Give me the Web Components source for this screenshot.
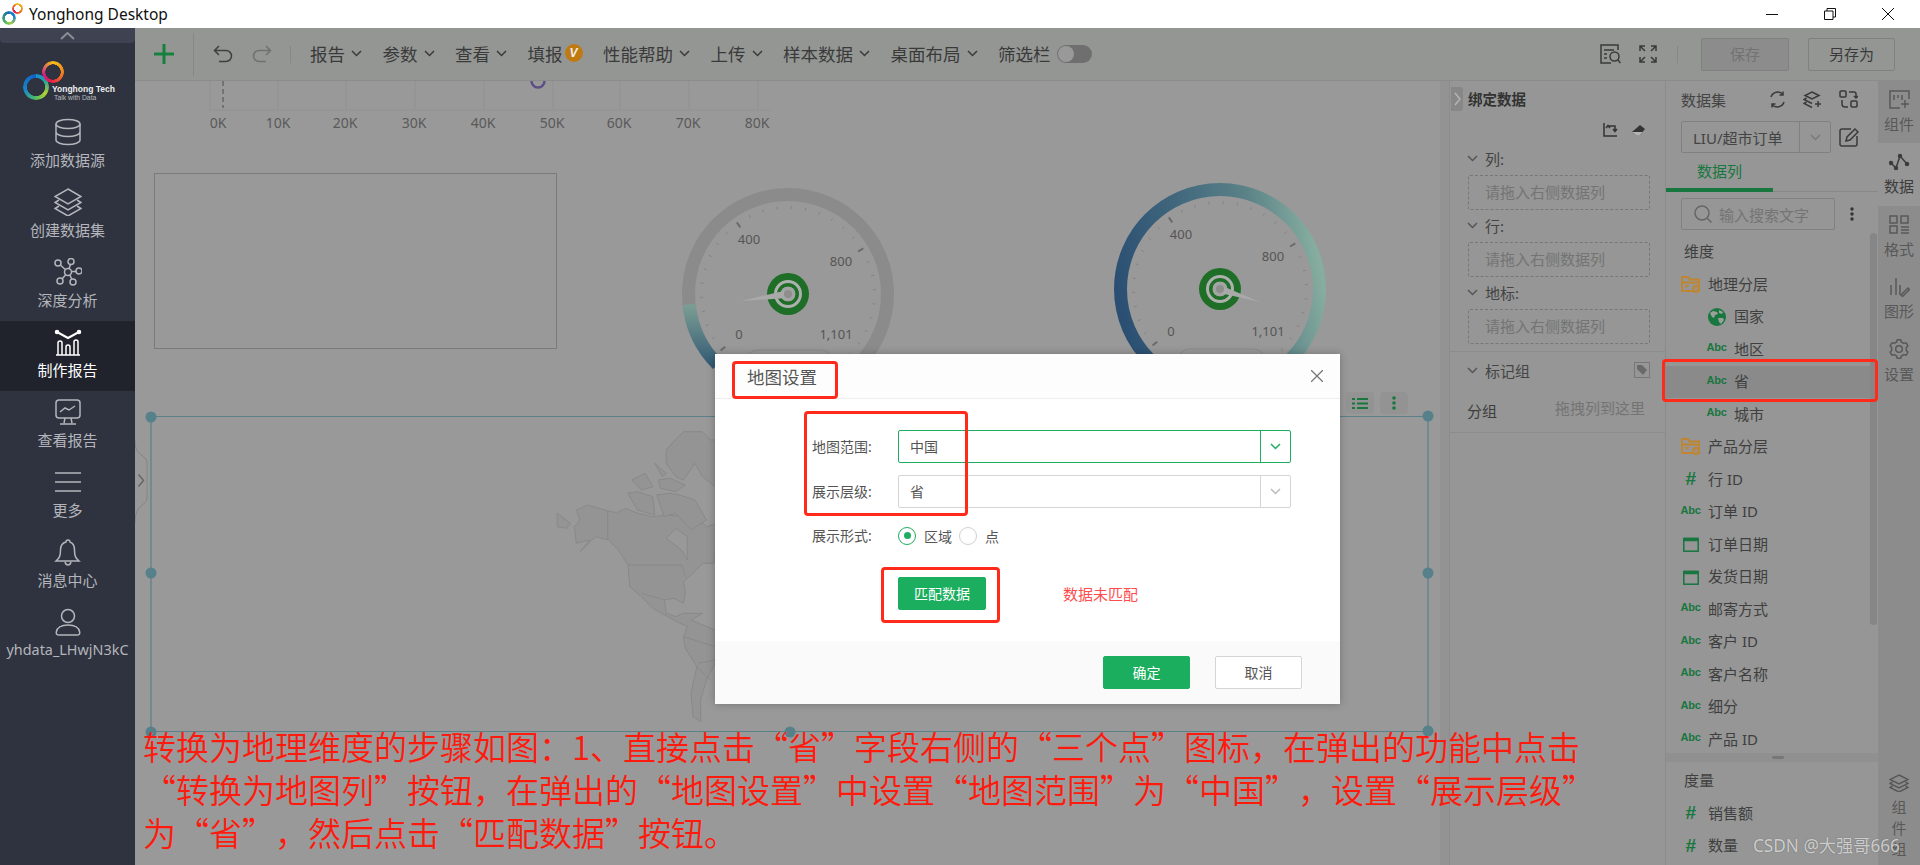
<!DOCTYPE html>
<html lang="zh-CN">
<head>
<meta charset="utf-8">
<title>Yonghong Desktop</title>
<style>
html, body {
	margin: 0;
	height: 865px;
	overflow: hidden;
	background: #999;
	font-family: "Noto Sans", "Noto Sans CJK SC", sans-serif;
	color: #3d3d3d;
}
</style>
</head>
<body>
<yh-titlebar>Yonghong Desktop</yh-titlebar>
<yh-workbench>
	<yh-sidenav slot="nav"></yh-sidenav>
	<yh-toolbar slot="top"></yh-toolbar>
	<yh-canvas></yh-canvas>
	<yh-bind-panel></yh-bind-panel>
	<yh-data-panel></yh-data-panel>
	<yh-rail></yh-rail>
	<yh-map-dialog slot="modal"></yh-map-dialog>
</yh-workbench>
<yh-callout x="732" y="361" w="106" h="38"></yh-callout>
<yh-callout x="804" y="411" w="164" h="105"></yh-callout>
<yh-callout x="881" y="567" w="119" h="56"></yh-callout>
<yh-callout x="1662" y="359" w="216" h="43"></yh-callout>
<yh-note>转换为地理维度的步骤如图：1、直接点击“省”字段右侧的“三个点”图标，在弹出的功能中点击<br>“转换为地图列”按钮，在弹出的“地图设置”中设置“地图范围”为“中国”，设置“展示层级”<br>为“省”，然后点击“匹配数据”按钮。</yh-note>
<yh-watermark>CSDN @大强哥666</yh-watermark>

<script>
(() => {

const GREEN = '#18763f';

const svg = (w, h, body, extra = '') =>
	`<svg width="${w}" height="${h}" viewBox="0 0 ${w} ${h}" fill="none" stroke="currentColor" stroke-width="1.5" ${extra}>${body}</svg>`;

const chevron = (w = 11, color = 'currentColor') =>
	`<svg width="${w}" height="7" viewBox="0 0 11 7" fill="none" stroke="${color}" stroke-width="1.5"><path d="M1 1l4.5 4.5L10 1"/></svg>`;

// six lobes, the same outline the settings tab uses
function gear_path() {
	const pts = [];
	for (let i = 0; i < 6; i++) {
		const mid = i * 60;
		for (const [off, r] of [[-19, 7.4], [-11, 9.4], [11, 9.4], [19, 7.4]]) {
			const a = (mid + off) * Math.PI / 180;
			pts.push(`${(10 + r * Math.sin(a)).toFixed(1)} ${(10 - r * Math.cos(a)).toFixed(1)}`);
		}
	}
	return `M${pts.join('L')}Z`;
}

const ICONS = {
	db: svg(28, 28, '<ellipse cx="14" cy="6" rx="12" ry="4.500"/><path d="M2 6v16c0 2.500 5.400 4.500 12 4.500s12-2 12-4.500V6M2 14c0 2.500 5.400 4.500 12 4.500s12-2 12-4.500"/>', 'stroke-width="2"'),
	layers: svg(28, 28, '<path d="M14 1L27 8.500 14 16 1 8.500z"/><path d="M5 12L1 14.500 14 22l13-7.500-4-2.500"/><path d="M5 18l-4 2.500L14 28l13-7.500-4-2.500"/>'),
	nodes: svg(28, 28, '<circle cx="14" cy="14" r="3.500"/><circle cx="4" cy="5" r="3"/><circle cx="17" cy="3.500" r="3"/><circle cx="25" cy="13" r="3"/><circle cx="19" cy="24" r="3"/><circle cx="6" cy="23" r="3"/><path d="M6.300 7l5 4.500M16.500 6.500l-1.500 4M22 13.500h-4.500M17.800 21l-2-3.800M8 21l3.500-4"/>'),
	chart: svg(28, 28, '<path d="M3 4l11 6 11-6" stroke-width="2"/><circle cx="3" cy="4" r="1.500" fill="currentColor"/><circle cx="25" cy="4" r="1.500" fill="currentColor"/><path d="M2 27h24M4 27V15a2 2 0 014 0v12M12 27v-8a2 2 0 014 0v8M20 27V14a2 2 0 014 0v13"/>'),
	monitor: svg(28, 28, '<rect x="2" y="2" width="24" height="18" rx="3"/><path d="M6 14l5-4 4 2 6-4M11 20l-1 5M17 20l1 5M6 26h16"/>'),
	more: svg(28, 28, '<path d="M1 5h26M1 14h26M1 23h26"/>', 'stroke-width="2"'),
	bell: svg(28, 28, '<path d="M14 2c-1 0-2 .8-2 2C8 5 6.500 8.500 6.500 12c0 6-1 8-4.500 11h23c-3.500-3-4.500-5-4.500-11 0-3.500-1.500-7-4.500-8 0-1.200-1-2-2-2zM11 24c.5 2 1.500 3 3 3s2.500-1 3-3"/>'),
	user: svg(28, 28, '<circle cx="14" cy="8" r="6.500"/><path d="M5 27h18c2 0 3-1 2.700-3-1-5-6-7-11.700-7S3.300 19 2.300 24C2 26 3 27 5 27z"/>'),
	plus: `<svg width="20" height="20" viewBox="0 0 20 20"><path d="M10 0v20M0 10h20" stroke="#18803f" stroke-width="3"/></svg>`,
	undo: svg(20, 18, '<path d="M6 1L1.500 5.500 6 10M1.500 5.500H13a5.500 5.500 0 010 11H6"/>'),
	redo: svg(20, 18, '<path d="M14 1l4.500 4.500L14 10M18.500 5.500H7a5.500 5.500 0 000 11h7"/>'),
	report_search: svg(21, 20, '<path d="M18 6V1H1v18h10M4 6h10M4 10h3M4 14h3"/><circle cx="14.500" cy="12.500" r="4.500"/><path d="M18 16l2.500 3"/>'),
	fullscreen: svg(18, 18, '<path d="M1 6V1h5M1 1l5 5M12 1h5v5M17 1l-5 5M1 12v5h5M1 17l5-5M17 12v5h-5M17 17l-5-5"/>'),
	swap: svg(16, 16, '<path d="M2 1v13h13M6 4h7v5M4 6l2-2.500L8 6M11 7l2 2.500L15 7"/>'),
	eraser: `<svg width="15" height="13" viewBox="0 0 15 13"><path d="M9 1l5 4-5 6H5L1 8z" fill="#333"/><path d="M1 8l4 3h4l2.500-3z" fill="#b4b4b4"/></svg>`,
	tag: `<svg width="16" height="16" viewBox="0 0 16 16"><rect x=".5" y=".5" width="15" height="15" fill="none" stroke="#777"/><path d="M3 3h5l5 5-4 5-6-6z" fill="#6a6a6a"/></svg>`,
	refresh: svg(17, 17, '<path d="M2 6a7 7 0 0112-2.500M15 11a7 7 0 01-12 2.500M14 .5v3.500h-3.500M3 16.500V13h3.500"/>'),
	layers_plus: svg(19, 17, '<path d="M9 1l7 3.500-7 3.500-7-3.500zM3.500 7L1 8.500 9 12.500M3.500 11L1 12.500 9 16.500M15 10v6M12 13h6"/>'),
	col_swap: svg(19, 18, '<rect x="1" y="1" width="6" height="6" rx="1"/><rect x="12" y="11" width="6" height="6" rx="1"/><path d="M10 2h5a2 2 0 012 2v3M3 10v4a3 3 0 003 3h3M15 6l2 2 2-2"/>'),
	edit: svg(20, 20, '<path d="M12 2H3a2 2 0 00-2 2v13a2 2 0 002 2h13a2 2 0 002-2V9"/><path d="M7 14l1-4 8-8 3 3-8 8z"/>'),
	search: svg(18, 18, '<circle cx="8" cy="8" r="7"/><path d="M13 13l4.500 4.500"/>'),
	dots: `<svg width="4" height="14" viewBox="0 0 4 14" fill="#333"><circle cx="2" cy="2" r="1.700"/><circle cx="2" cy="7" r="1.700"/><circle cx="2" cy="12" r="1.700"/></svg>`,
	folder: `<svg width="19" height="17" viewBox="0 0 19 17" fill="none" stroke="#c08530" stroke-width="1.800"><path d="M1 15V1h6l1.500 2.500H18V15H1zM1 6.500h17"/><path d="M4 9.500l3 1-3 1M8 9.500H4" stroke-width="1"/><circle cx="15" cy="13" r="3" fill="#959695"/><path d="M13.500 11.500l3 3" stroke-width="1"/></svg>`,
	globe: `<svg width="18" height="18" viewBox="0 0 18 18"><circle cx="9" cy="9" r="9" fill="#18763f"/><path d="M2 5l3-2 4 1 1 2-3 1-1 3-2-1zM11 2l4 2-1 2-3-1zM10 10l5 0 1 2-3 4-2-2z" fill="#9aa09a"/></svg>`,
	calendar: `<svg width="16" height="16" viewBox="0 0 16 16" fill="none" stroke="#18763f" stroke-width="1.500"><rect x=".8" y="2.500" width="14.400" height="12.700"/><path d="M.8 3.500h14.400" stroke-width="3.500"/></svg>`,
	rail_comp: svg(21, 19, '<path d="M20 9V1H1v17h10"/><path d="M5 5v5M9 5v3M13 5v5M16 10v8M12 14h8"/>', 'stroke-width="1.700"'),
	rail_data: svg(21, 18, '<path d="M2 10l5 5 4-12 7 8"/><circle cx="2" cy="10" r="1.500" fill="currentColor"/><circle cx="7" cy="15" r="1.500" fill="currentColor"/><circle cx="11" cy="3" r="1.500" fill="currentColor"/><circle cx="18" cy="11" r="1.500" fill="currentColor"/>', 'stroke-width="2"'),
	rail_format: svg(21, 19, '<rect x="1" y="1" width="7" height="7"/><rect x="12" y="1" width="7" height="7"/><rect x="1" y="11" width="7" height="7"/><path d="M12 12h8M12 15h8M12 18h8"/>', 'stroke-width="1.700"'),
	rail_shape: svg(21, 20, '<path d="M2 8v10M7 1v17M11 18V8M12 18l7-7 1.500 1.500-7 7z"/>', 'stroke-width="1.700"'),
	rail_gear: svg(20, 20, `<path d="${gear_path()}" stroke-linejoin="round"/><circle cx="10" cy="10" r="3.300"/>`),
	rail_layers: svg(20, 18, '<path d="M10 1l9 4.500-9 4.500L1 5.500zM3.500 8L1 9.500 10 14l9-4.500L16.500 8M3.500 12L1 13.500 10 18l9-4.500L16.500 12"/>')
};

class ShadowEl extends HTMLElement {
	connectedCallback() {
		if (this.shadowRoot) {
			return;
		}

		this.attachShadow({ mode: 'open' });
		this.shadowRoot.innerHTML = this.render();
	}

	attr(name, fallback = '') {
		return this.getAttribute(name) ?? fallback;
	}
}

customElements.define('yh-titlebar', class extends ShadowEl {
	render() {
		return `<style>
			:host { display: flex; align-items: center; height: 28px; background: #fff; color: #111; font-size: 15.500px; position: relative; }
			.logo { width: 22px; height: 22px; margin: 0 5px 0 2px; position: relative; }
			.ring { position: absolute; border-radius: 50%; -webkit-mask: radial-gradient(closest-side, transparent 58%, #000 62%); mask: radial-gradient(closest-side, transparent 58%, #000 62%); }
			.a { left: 0; top: 8px; width: 14px; height: 14px; background: conic-gradient(#1a7fd0, #1a7fd0 20%, #a5d040 45%, #3fb56a 65%, #1a5fb0); }
			.b { left: 10px; top: 0; width: 11px; height: 11px; background: conic-gradient(#f5b81c, #f08020 35%, #e01c50 65%, #f5b81c); }
			.label { flex: 1; }
			.controls { display: flex; margin-right: 26px; gap: 46px; align-items: center; }
		</style>
		<div class="logo"><div class="ring a"></div><div class="ring b"></div></div>
		<div class="label"><slot></slot></div>
		<div class="controls">
			<svg width="12" height="12" viewBox="0 0 12 12" stroke="#111" fill="none"><path d="M0 6.500h12"/></svg>
			<svg width="12" height="12" viewBox="0 0 12 12" stroke="#111" fill="none"><path d="M.5 3h8.500v8.500H.5zM3 3V.5h8.500V9H9"/></svg>
			<svg width="12" height="12" viewBox="0 0 12 12" stroke="#111" fill="none"><path d="M0 0l12 12M12 0L0 12"/></svg>
		</div>`;
	}
});

customElements.define('yh-workbench', class extends ShadowEl {
	render() {
		return `<style>
			:host { display: grid; grid-template-columns: 135px 1fr; height: 837px; position: relative; overflow: hidden; }
			.main { display: flex; flex-direction: column; min-width: 0; height: 837px; }
			.row { flex: 1; display: flex; min-height: 0; }
			.overlay { position: absolute; left: 135px; right: 0; top: 0; bottom: 0; display: flex; justify-content: center; align-items: flex-start; padding-top: 326px; box-sizing: border-box; pointer-events: none; }
		</style>
		<slot name="nav"></slot>
		<div class="main">
			<slot name="top"></slot>
			<div class="row"><slot></slot></div>
		</div>
		<div class="overlay"><slot name="modal"></slot></div>`;
	}
});

customElements.define('yh-sidenav', class extends ShadowEl {
	render() {
		return `<style>
			:host { display: flex; flex-direction: column; background: #2f3340; height: 837px; }
			.up { height: 15px; background: #3f4250; border-radius: 0 0 4px 4px; display: flex; justify-content: center; align-items: center; color: #8b8d96; }
			.logo { height: 68px; position: relative; }
			.ring { position: absolute; border-radius: 50%; -webkit-mask: radial-gradient(closest-side, transparent 68%, #000 72%); mask: radial-gradient(closest-side, transparent 68%, #000 72%); }
			.a { left: 23px; top: 31px; width: 26px; height: 26px; background: conic-gradient(#1890d0 0%, #22a0a0 15%, #b4d030 35%, #50c060 50%, #1888c8 70%, #1060c0 100%); }
			.b { left: 42px; top: 18px; width: 22px; height: 22px; background: conic-gradient(#f8c018, #f07820 30%, #e8184c 55%, #c8208c 70%, #f8c018); }
			.name { position: absolute; left: 52px; top: 40px; color: #eee; font: bold 8.500px/12px "Liberation Sans", sans-serif; white-space: nowrap; }
			.tag { position: absolute; left: 54px; top: 50px; color: #bbb; font: 6.800px/10px "Liberation Sans", sans-serif; white-space: nowrap; }
		</style>
		<div class="up"><svg width="15" height="8" viewBox="0 0 15 8" fill="none" stroke="currentColor" stroke-width="2"><path d="M1 7l6.500-6L14 7"/></svg></div>
		<div class="logo">
			<div class="ring a"></div><div class="ring b"></div>
			<div class="name">Yonghong Tech</div>
			<div class="tag">Talk with Data</div>
		</div>
		<yh-nav-item icon="db">添加数据源</yh-nav-item>
		<yh-nav-item icon="layers">创建数据集</yh-nav-item>
		<yh-nav-item icon="nodes">深度分析</yh-nav-item>
		<yh-nav-item icon="chart" active>制作报告</yh-nav-item>
		<yh-nav-item icon="monitor">查看报告</yh-nav-item>
		<yh-nav-item icon="more">更多</yh-nav-item>
		<yh-nav-item icon="bell">消息中心</yh-nav-item>
		<yh-nav-item icon="user" small>yhdata_LHwjN3kC</yh-nav-item>`;
	}
});

customElements.define('yh-nav-item', class extends ShadowEl {
	render() {
		return `<style>
			:host { display: flex; flex-direction: column; align-items: center; height: 70px; padding-top: 7px; box-sizing: border-box; color: #b4b6bb; font-size: 15px; white-space: nowrap; }
			:host([active]) { background: #21232c; color: #fff; }
			:host([small]) { font-size: 14.400px; }
			.icon { height: 28px; display: block; }
			.text { line-height: 28px; }
		</style>
		<div class="icon">${ICONS[this.attr('icon')]}</div>
		<div class="text"><slot></slot></div>`;
	}
});

customElements.define('yh-toolbar', class extends ShadowEl {
	render() {
		return `<style>
			:host { display: flex; align-items: center; height: 53px; padding-left: 19px; box-sizing: border-box; background: #949694; border-bottom: 1px solid #8a8c8c; font-size: 17.500px; color: #3a3a3a; white-space: nowrap; }
			.sep { width: 1px; background: #868886; }
			.tall { height: 43px; margin: 0 19px; }
			.short { height: 17px; margin: 0 19px 0 18px; }
			.undo { margin-right: 19px; color: #3f3f3f; display: flex; }
			.redo { color: #6f706f; display: flex; }
			.menus { display: flex; align-items: center; gap: 20.500px; margin-bottom: 2px; }
			.plus { display: flex; }
			.badge { display: inline-flex; width: 18px; height: 18px; border-radius: 50%; background: #c07a12; color: #eee; font: italic bold 12px/18px "Liberation Sans", sans-serif; justify-content: center; margin-left: 2px; }
			.fill { display: flex; align-items: center; }
			.switch { display: flex; align-items: center; }
			.toggle { width: 35px; height: 18px; border-radius: 9px; background: #6f6f6f; margin-left: 6px; position: relative; top: 1px; }
			.toggle::before { content: ""; position: absolute; left: 1px; top: 1px; width: 16px; height: 16px; border-radius: 50%; background: #999; }
			.right { margin-left: auto; display: flex; align-items: center; margin-right: 25px; }
			.right .sep { height: 17px; margin: 0 23px 0 20px; }
			.tool { display: flex; margin-right: 18px; }
			.tool:nth-child(2) { margin-right: 0; }
			.btn { width: 88px; height: 33px; line-height: 31px; box-sizing: border-box; border: 1px solid #7f807f; border-radius: 2px; text-align: center; font-size: 15px; }
			.btn.last { width: 87px; }
			.save { background: #8c8c8c; color: #737373; margin-right: 19px; }
		</style>
		<div class="plus">${ICONS.plus}</div>
		<div class="sep tall"></div>
		<div class="undo">${ICONS.undo}</div>
		<div class="redo">${ICONS.redo}</div>
		<div class="sep short"></div>
		<div class="menus">
			<yh-menu>报告</yh-menu>
			<yh-menu>参数</yh-menu>
			<yh-menu>查看</yh-menu>
			<div class="fill">填报<span class="badge">V</span></div>
			<yh-menu>性能帮助</yh-menu>
			<yh-menu>上传</yh-menu>
			<yh-menu>样本数据</yh-menu>
			<yh-menu>桌面布局</yh-menu>
			<div class="switch">筛选栏<div class="toggle"></div></div>
		</div>
		<div class="right">
			<div class="tool">${ICONS.report_search}</div>
			<div class="tool">${ICONS.fullscreen}</div>
			<div class="sep"></div>
			<div class="btn save">保存</div>
			<div class="btn last">另存为</div>
		</div>`;
	}
});

customElements.define('yh-menu', class extends ShadowEl {
	render() {
		return `<style>
			:host { display: flex; align-items: center; gap: 6px; }
		</style>
		<slot></slot>${chevron()}`;
	}
});

customElements.define('yh-gauge', class extends ShadowEl {
	render() {
		const cx = +this.attr('cx');
		const cy = +this.attr('cy');
		const [nx, ny] = this.attr('needle').split(',').map(Number);
		const mode = this.attr('mode');
		const full = mode === 'full';
		const pt = (r, deg) => {
			const a = deg * Math.PI / 180;
			return `${(r * Math.sin(a)).toFixed(1)} ${(-r * Math.cos(a)).toFixed(1)}`;
		};
		const arc = (from, to, r = 99.5) => `M${pt(r, from)}A${r} ${r} 0 ${to - from > 180 ? 1 : 0} 1 ${pt(r, to)}`;

		let ticks = '';
		for (let i = 0; i <= 28; i++) {
			const deg = -130 + i * 9.44;
			const major = i % 10 === 0;
			ticks += `<path d="M${pt(major ? 82 : 85, deg)}L${pt(88, deg)}" stroke="${major ? '#6a6a6a' : '#848484'}" stroke-width="${major ? 2 : 1}"/>`;
		}

		const ring = full
			? `<path d="${arc(-135, 135)}" stroke="url(#full)" stroke-width="13" fill="none"/>`
			: `<path d="${arc(-135, 135)}" stroke="#8a8b8a" stroke-width="13" fill="none"/>
				<path d="${arc(-135, -96)}" stroke="url(#part)" stroke-width="13" fill="none"/>`;

		return `<style>
			:host { position: absolute; left: ${cx - 120}px; top: ${cy - 120}px; width: 240px; height: 240px; }
			text { font: 13px "Noto Sans", sans-serif; fill: #555; text-anchor: middle; dominant-baseline: middle; }
		</style>
		<svg width="240" height="240" viewBox="-120 -120 240 240">
			<defs>
				<linearGradient id="part" gradientUnits="userSpaceOnUse" x1="0" y1="10" x2="0" y2="75">
					<stop offset="0" stop-color="#7d9f95"/><stop offset="1" stop-color="#2f5672"/>
				</linearGradient>
				<linearGradient id="full" gradientUnits="userSpaceOnUse" x1="-90" y1="70" x2="110" y2="30">
					<stop offset="0" stop-color="#2b4f72"/><stop offset=".4" stop-color="#42697e"/><stop offset=".72" stop-color="#5b8287"/><stop offset="1" stop-color="#86ad9f"/>
				</linearGradient>
			</defs>
			${ring}
			${ticks}
			<rect x="-42" y="${full ? 60 : 56}" width="87" height="30" rx="12" fill="none" stroke="#8b8b8b"/>
			<text x="-39" y="-53">400</text>
			<text x="53" y="-31">800</text>
			<text x="-49" y="${full ? 44 : 42}">0</text>
			<text x="48" y="${full ? 44 : 42}">1,101</text>
			<circle r="21" fill="#1e6e27"/>
			<circle r="12.500" fill="#1e6e27" stroke="#adb0ad" stroke-width="3"/>
			<circle r="8" fill="#a2a5a2" stroke="#1e6e27" stroke-width="1"/>
			<path d="M0 -4L${nx} ${ny}L0 4z" fill="#a9a9a9"/>
			<circle r="4" fill="#8e8e8e"/>
		</svg>`;
	}
});

customElements.define('yh-canvas', class extends ShadowEl {
	render() {
		const labels = [218, 278, 345, 414, 483, 552, 619, 688, 757];
		const grid = [210, 278, 346, 415, 484, 553, 620, 689, 758];
		const x_axis = labels.map((x, i) => `<text x="${x}" y="124">${i * 10 ? i * 10 + 'K' : '0K'}</text>`).join('');
		const x_grid = grid.map(x => `<path d="M${x} 81V110"/>`).join('');
		const handles = [[151, 417], [151, 573], [151, 732], [790, 732], [1428, 416], [1428, 573], [1428, 731]]
			.map(([x, y]) => `<circle cx="${x}" cy="${y}" r="5.500"/>`).join('');

		return `<style>
			:host { display: block; flex: 0 0 1305px; height: 784px; position: relative; background: #999; overflow: hidden; }
			svg.board { position: absolute; left: 0; top: 0; }
			svg.board text { font: 14px "Noto Sans", sans-serif; fill: #5a5a5a; text-anchor: middle; dominant-baseline: middle; }
			.sticky { position: absolute; left: 19px; top: 92px; width: 403px; height: 176px; border: 1px solid #7b7b7b; box-sizing: border-box; }
			.frame-tools { position: absolute; left: 1211px; top: 311px; display: flex; gap: 6px; }
			.frame-tools div { width: 28px; height: 22px; background: #939393; border-radius: 4px; display: flex; align-items: center; justify-content: center; }
		</style>
		<svg class="board" width="1305" height="784" viewBox="135 81 1305 784">
			<g stroke="#919191" fill="none">${x_grid}<path d="M210 110H770"/></g>
			<path d="M223 81V108" stroke="#4e4e4e" stroke-dasharray="5 3"/>
			<circle cx="538" cy="81" r="6.500" fill="none" stroke="#5c4f87" stroke-width="2.500"/>
			${x_axis}
			<g transform="translate(140 400) scale(.3827 .3333)" fill="#949494" stroke="#898989">
				<path vector-effect="non-scaling-stroke" d="M1140 330L1170 315 1220 332 1245 338 1270 325 1300 340 1340 350 1380 345 1420 350 1450 345 1480 380 1503 372V440L1500 490 1470 490 1440 525 1420 545 1425 580 1420 610 1395 595 1370 600 1375 640 1400 650 1420 640 1470 640 1440 660 1460 670 1503 690V790L1480 840 1465 900 1465 965 1445 950 1440 880 1455 800 1425 745 1420 710 1430 680 1395 660 1340 625 1310 590 1280 560 1275 495 1250 450 1225 420 1190 410 1150 455 1175 420 1140 430 1135 380 1150 360Z"/>
				<path vector-effect="non-scaling-stroke" d="M1390 130L1420 95 1470 95 1490 120 1503 120V260L1470 230 1450 190 1420 240 1400 230 1375 190 1375 150Z"/>
				<path vector-effect="non-scaling-stroke" d="M1375 415L1400 385 1430 410 1430 480 1415 450Z" fill="#999"/>
				<path vector-effect="non-scaling-stroke" d="M1285 240L1320 220 1340 260 1310 270ZM1355 240L1385 235 1425 255 1400 275 1360 265ZM1275 280L1300 275 1340 290 1345 345 1300 330ZM1350 285L1385 280 1410 285 1450 300 1480 360 1440 390 1400 340 1370 350ZM1345 190L1375 220 1365 230ZM1090 340L1125 370 1115 385 1090 380Z"/>
				<path vector-effect="non-scaling-stroke" d="M1222 332V420M1275 495H1415L1425 530M1310 580L1370 600M1420 710L1503 740M1460 790L1503 780M1455 800L1490 840" fill="none"/>
			</g>
			<g fill="none" stroke="#5b8088" stroke-width="1.200"><path d="M151 416.500H1428V731.500H151Z"/></g>
			<g fill="#56808a">${handles}</g>
			<path d="M135 440c0 12 4 13 9 17 3 3 3 3 3 8v30c0 6 0 6-5 10-5 5-7 8-7 18" fill="none" stroke="#858585"/>
			<path d="M138.500 474.500l5 6-5 6" fill="none" stroke="#666" stroke-width="1.500"/>
		</svg>
		<div class="sticky"></div>
		<div class="frame-tools">
			<div><svg width="16" height="13" viewBox="0 0 16 13" stroke="${GREEN}" stroke-width="2"><path d="M0 2h3M5 2h11M0 6.500h3M5 6.500h11M0 11h3M5 11h11"/></svg></div>
			<div><svg width="4" height="14" viewBox="0 0 4 14" fill="${GREEN}"><circle cx="2" cy="2" r="1.800"/><circle cx="2" cy="7" r="1.800"/><circle cx="2" cy="12" r="1.800"/></svg></div>
		</div>
		<yh-gauge cx="653" cy="213" needle="-47,7" mode="part"></yh-gauge>
		<yh-gauge cx="1085" cy="208" needle="40,13" mode="full"></yh-gauge>`;
	}
});

customElements.define('yh-drop-row', class extends ShadowEl {
	render() {
		return `<style>
			:host { display: block; }
			.head { display: flex; align-items: center; height: 20px; margin: -1px 0 1px -1px; gap: 7px; color: #444; }
			.box { margin-top: 7px; height: 35px; line-height: 33px; box-sizing: border-box; border: 1px dashed #777; border-radius: 2px; padding-left: 16px; color: #747474; }
		</style>
		<div class="head">${chevron(11, '#555')}<slot></slot></div>
		<div class="box">请拖入右侧数据列</div>`;
	}
});

customElements.define('yh-bind-panel', class extends ShadowEl {
	render() {
		return `<style>
			:host { display: flex; flex: 0 0 226px; height: 784px; background: #959695; font-size: 15px; box-sizing: border-box; border-right: 1px solid #8a8c8a; position: relative; }
			.strip { flex: 0 0 10px; background: #929392; border-right: 1px solid #8b8c8b; box-sizing: border-box; }
			.tab { position: absolute; left: 11px; top: 6px; width: 12px; height: 24px; background: #878787; border-radius: 0 3px 3px 0; display: flex; align-items: center; justify-content: center; }
			.body { flex: 1; min-width: 0; }
			.title { height: 36px; line-height: 36px; padding-left: 18px; font-weight: bold; font-size: 14.500px; color: #333; }
			.tools { height: 26px; display: flex; justify-content: flex-end; align-items: center; gap: 13px; padding-right: 19px; color: #333; }
			.rows { padding: 6px 15px 0 18px; display: flex; flex-direction: column; gap: 6px; }
			.line { border-top: 1px solid #8b8c8b; margin-top: 7px; }
			.mark { display: flex; align-items: center; height: 36px; padding: 0 15px 0 17px; gap: 7px; color: #444; }
			.mark .name { flex: 1; }
			.group { display: flex; justify-content: space-between; height: 45px; align-items: center; padding: 0 20px 0 17px; border-bottom: 1px solid #8b8c8b; box-sizing: border-box; }
			.group span:last-child { color: #747474; position: relative; top: -3px; }
		</style>
		<div class="strip"></div>
		<div class="tab"><svg width="7" height="14" viewBox="0 0 7 14" fill="none" stroke="#b4b4b4" stroke-width="1.500"><path d="M1 1l5 6-5 6"/></svg></div>
		<div class="body">
			<div class="title">绑定数据</div>
			<div class="tools">${ICONS.swap}${ICONS.eraser}</div>
			<div class="rows">
				<yh-drop-row>列:</yh-drop-row>
				<yh-drop-row>行:</yh-drop-row>
				<yh-drop-row>地标:</yh-drop-row>
			</div>
			<div class="line"></div>
			<div class="mark">${chevron(11, '#555')}<span class="name">标记组</span>${ICONS.tag}</div>
			<div class="group"><span>分组</span><span>拖拽列到这里</span></div>
		</div>`;
	}
});

customElements.define('yh-field', class extends ShadowEl {
	render() {
		const kind = this.attr('kind');
		const glyphs = {
			abc: '<span class="abc">Abc</span>',
			num: '<span class="num">#</span>',
			date: ICONS.calendar,
			folder: ICONS.folder,
			globe: ICONS.globe
		};

		return `<style>
			:host { display: flex; align-items: center; height: 32.500px; padding-left: 15px; font-size: 15px; color: #3f3f3f; white-space: nowrap; }
			:host([child]) { padding-left: 41px; }
			:host([selected]) { background: #8a8a8a; }
			:host([plain]) .glyph { display: none; }
			:host([plain]) { padding-left: 18px; }
			.glyph { width: 19px; margin-right: 8px; display: flex; justify-content: center; align-items: center; }
			.label { position: relative; top: -1px; }
			.abc { color: ${GREEN}; font: bold 11px "Liberation Sans", sans-serif; letter-spacing: -.3px; position: relative; top: -2px; }
			.num { color: ${GREEN}; font: italic bold 19px "Liberation Sans", sans-serif; }
		</style>
		<div class="glyph">${glyphs[kind] || ''}</div><span class="label"><slot></slot></span>`;
	}
});

customElements.define('yh-data-panel', class extends ShadowEl {
	render() {
		return `<style>
			:host { display: flex; flex-direction: column; flex: 0 0 212px; height: 784px; background: #959695; font-size: 15px; position: relative; overflow: hidden; }
			.head { height: 36px; display: flex; align-items: center; padding: 0 20px 0 15px; color: #444; }
			.head .name { flex: 1; }
			.head .icons { display: flex; gap: 17px; color: #3a3a3a; align-items: center; }
			.select-row { display: flex; align-items: center; margin: 4px 0 0 15px; }
			.select { width: 150px; height: 32px; box-sizing: border-box; border: 1px solid #7f807f; border-radius: 2px; display: flex; align-items: center; color: #444; white-space: nowrap; }
			.select .value { flex: 1; padding-left: 11px; }
			.select .drop { width: 30px; height: 100%; border-left: 1px solid #7f807f; display: flex; align-items: center; justify-content: center; }
			.edit { margin-left: 8px; color: #3a3a3a; display: flex; }
			.tabs { height: 39px; border-bottom: 1px solid #878887; box-sizing: border-box; position: relative; }
			.tab { width: 107px; height: 39px; box-sizing: border-box; border-bottom: 4px solid ${GREEN}; color: ${GREEN}; text-align: center; line-height: 37px; }
			.search-row { display: flex; align-items: center; margin: 6px 0 0 15px; }
			.search { width: 154px; height: 32px; box-sizing: border-box; border: 1px solid #7f807f; border-radius: 2px; display: flex; align-items: center; padding-left: 12px; gap: 7px; color: #747474; white-space: nowrap; }
			.search svg { color: #666; }
			.more { margin-left: 15px; display: flex; }
			.tree { margin-top: 5.700px; height: 517.300px; overflow: hidden; }
			.band { height: 9px; background: #8f908f; display: flex; justify-content: center; align-items: center; padding-left: 12px; box-sizing: border-box; margin-bottom: 2.700px; }
			.band div { width: 12px; height: 3px; border-radius: 2px; background: #777; }
			.thumb { position: absolute; left: 204px; top: 152px; width: 7px; height: 392px; background: #868686; border-radius: 4px; }
		</style>
		<div class="head">
			<span class="name">数据集</span>
			<div class="icons">${ICONS.refresh}${ICONS.layers_plus}${ICONS.col_swap}</div>
		</div>
		<div class="select-row">
			<div class="select"><span class="value">LIU/超市订单</span><span class="drop">${chevron(11, '#7a7a7a')}</span></div>
			<div class="edit">${ICONS.edit}</div>
		</div>
		<div class="tabs"><div class="tab">数据列</div></div>
		<div class="search-row">
			<div class="search">${ICONS.search}输入搜索文字</div>
			<div class="more">${ICONS.dots}</div>
		</div>
		<div class="tree">
			<yh-field kind="plain" plain>维度</yh-field>
			<yh-field kind="folder">地理分层</yh-field>
			<yh-field kind="globe" child>国家</yh-field>
			<yh-field kind="abc" child>地区</yh-field>
			<yh-field kind="abc" child selected>省</yh-field>
			<yh-field kind="abc" child>城市</yh-field>
			<yh-field kind="folder">产品分层</yh-field>
			<yh-field kind="num">行 ID</yh-field>
			<yh-field kind="abc">订单 ID</yh-field>
			<yh-field kind="date">订单日期</yh-field>
			<yh-field kind="date">发货日期</yh-field>
			<yh-field kind="abc">邮寄方式</yh-field>
			<yh-field kind="abc">客户 ID</yh-field>
			<yh-field kind="abc">客户名称</yh-field>
			<yh-field kind="abc">细分</yh-field>
			<yh-field kind="abc">产品 ID</yh-field>
		</div>
		<div class="band"><div></div></div>
		<yh-field kind="plain" plain>度量</yh-field>
		<yh-field kind="num">销售额</yh-field>
		<yh-field kind="num">数量</yh-field>
		<div class="thumb"></div>`;
	}
});

customElements.define('yh-rail-tab', class extends ShadowEl {
	render() {
		return `<style>
			:host { display: flex; flex-direction: column; align-items: center; height: 62.400px; padding-top: 8px; box-sizing: border-box; color: #585858; font-size: 15px; }
			:host([active]) { background: #959695; color: #3d3d3d; }
			.icon { height: 21px; display: flex; align-items: center; }
			.text { line-height: 24px; margin-top: 2px; }
		</style>
		<div class="icon">${ICONS[this.attr('icon')]}</div>
		<div class="text"><slot></slot></div>`;
	}
});

customElements.define('yh-rail', class extends ShadowEl {
	render() {
		return `<style>
			:host { display: flex; flex-direction: column; flex: 0 0 42px; height: 784px; background: #8c8c8c; overflow: hidden; }
			.grow { flex: 1; }
			.stack { display: flex; flex-direction: column; align-items: center; color: #585858; font-size: 15px; line-height: 21px; height: 91px; flex: none; }
			.stack svg { margin-bottom: 5px; }
		</style>
		<yh-rail-tab icon="rail_comp">组件</yh-rail-tab>
		<yh-rail-tab icon="rail_data" active>数据</yh-rail-tab>
		<yh-rail-tab icon="rail_format">格式</yh-rail-tab>
		<yh-rail-tab icon="rail_shape">图形</yh-rail-tab>
		<yh-rail-tab icon="rail_gear">设置</yh-rail-tab>
		<div class="grow"></div>
		<div class="stack">${ICONS.rail_layers}<span>组</span><span>件</span><span>组</span></div>`;
	}
});

customElements.define('yh-select', class extends ShadowEl {
	render() {
		return `<style>
			:host { display: flex; width: 393px; height: 33px; box-sizing: border-box; border: 1px solid #d5d5d5; border-radius: 2px; color: #555; font-size: 14px; align-items: center; }
			:host([focused]) { border-color: #1fae60; }
			.value { flex: 1; padding: 0 0 2px 11px; }
			.drop { width: 29px; height: 100%; border-left: 1px solid #d5d5d5; display: flex; align-items: center; justify-content: center; }
			:host([focused]) .drop { border-left-color: #1fae60; }
		</style>
		<div class="value"><slot></slot></div>
		<div class="drop">${chevron(11, this.hasAttribute('focused') ? '#1fae60' : '#bbb')}</div>`;
	}
});

customElements.define('yh-radio', class extends ShadowEl {
	render() {
		return `<style>
			:host { display: flex; align-items: center; gap: 8px; color: #555; font-size: 14px; }
			.dot { width: 18px; height: 18px; box-sizing: border-box; border: 1.500px solid #d0d0d0; border-radius: 50%; display: flex; align-items: center; justify-content: center; }
			:host([checked]) .dot { border-color: #1fae60; }
			:host([checked]) .dot::before { content: ""; width: 7px; height: 7px; border-radius: 50%; background: #1fae60; }
		</style>
		<div class="dot"></div><slot></slot>`;
	}
});

customElements.define('yh-map-dialog', class extends ShadowEl {
	render() {
		return `<style>
			:host { display: flex; flex-direction: column; width: 625px; height: 350px; background: #fff; box-shadow: 0 0 8px rgba(0,0,0,.25); color: #555; font-size: 14px; pointer-events: auto; }
			.head { height: 45px; flex: none; box-sizing: border-box; border-bottom: 1px solid #eee; display: flex; align-items: center; justify-content: space-between; padding: 0 17px 0 32px; background: #fdfdfd; font-size: 17.500px; }
			.head svg { display: block; }
			.body { flex: 1; padding: 31px 0 0 97px; }
			.row { display: flex; align-items: center; height: 33px; margin-bottom: 12px; }
			.row.tight { margin-bottom: 11px; }
			.label { width: 86px; flex: none; white-space: nowrap; padding-bottom: 2px; }
			.radios { display: flex; gap: 7px; }
			.match { display: flex; align-items: center; margin: 25px 0 0 86px; }
			.btn { width: 88px; height: 33px; box-sizing: border-box; line-height: 31px; text-align: center; border-radius: 2px; border: 1px solid #d5d5d5; }
			.primary { background: #1bae5e; border-color: #1bae5e; color: #fff; }
			.note { margin-left: 77px; color: #ff4d4d; font-size: 15px; }
			.foot { height: 63px; flex: none; background: #fafafa; display: flex; justify-content: flex-end; align-items: flex-start; gap: 25px; padding: 15px 38px 0 0; box-sizing: border-box; }
			.foot .btn { width: 87px; }
			.foot .btn:last-child { background: #fff; }
		</style>
		<div class="head">
			<span>地图设置</span>
			<svg width="12" height="12" viewBox="0 0 12 12" stroke="#777" stroke-width="1.300"><path d="M0 0l12 12M12 0L0 12"/></svg>
		</div>
		<div class="body">
			<div class="row"><span class="label">地图范围:</span><yh-select focused>中国</yh-select></div>
			<div class="row tight"><span class="label">展示层级:</span><yh-select>省</yh-select></div>
			<div class="row">
				<span class="label">展示形式:</span>
				<div class="radios"><yh-radio checked>区域</yh-radio><yh-radio>点</yh-radio></div>
			</div>
			<div class="match"><div class="btn primary">匹配数据</div><div class="note">数据未匹配</div></div>
		</div>
		<div class="foot"><div class="btn primary">确定</div><div class="btn">取消</div></div>`;
	}
});

customElements.define('yh-callout', class extends ShadowEl {
	render() {
		return `<style>
			:host { position: absolute; left: ${this.attr('x')}px; top: ${this.attr('y')}px; width: ${this.attr('w')}px; height: ${this.attr('h')}px; box-sizing: border-box; border: 3px solid #ff2a1a; border-radius: 4px; }
		</style>`;
	}
});

customElements.define('yh-note', class extends ShadowEl {
	render() {
		return `<style>
			:host { position: absolute; left: 143px; top: 725px; color: #ff1a0e; font: 350 33px/43px "Noto Sans CJK SC", sans-serif; white-space: nowrap; text-spacing-trim: space-all; }
		</style>
		<slot></slot>`;
	}
});

customElements.define('yh-watermark', class extends ShadowEl {
	render() {
		return `<style>
			:host { position: absolute; left: 1753px; top: 834px; color: rgba(255,255,255,.7); font-size: 17.200px; line-height: 24px; white-space: nowrap; text-shadow: 0 0 1px rgba(60,60,60,.7); }
		</style>
		<slot></slot>`;
	}
});

})();
</script>
</body>
</html>
